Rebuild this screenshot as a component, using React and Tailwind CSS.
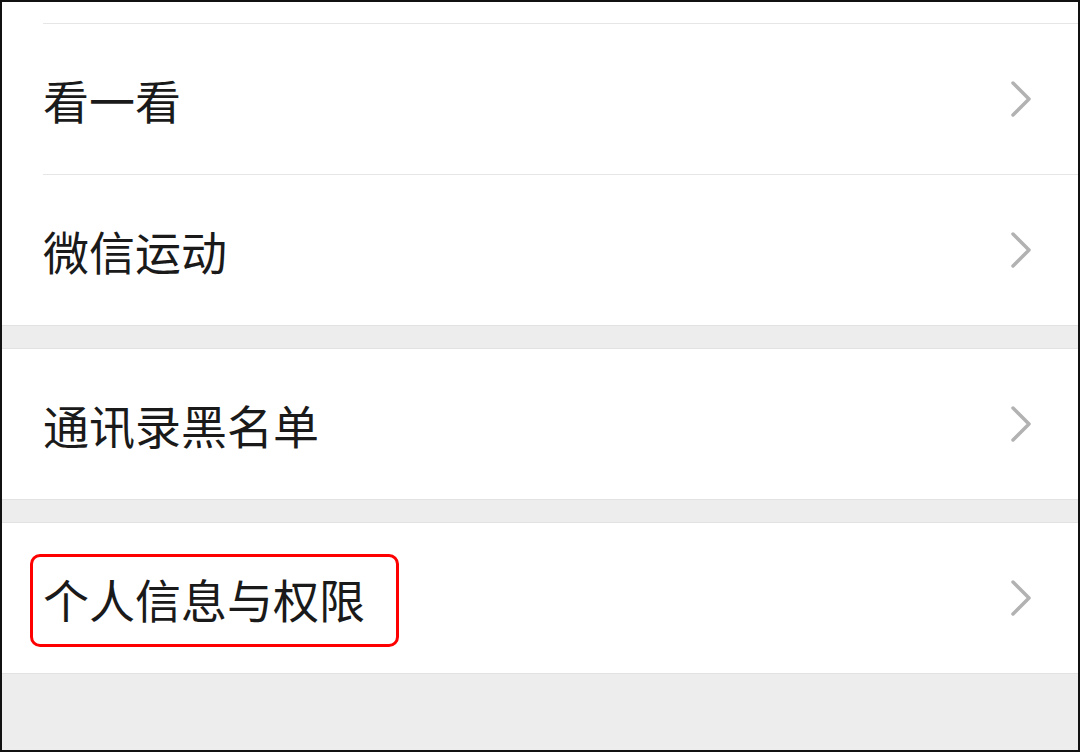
import React from 'react';

const font = { fontFamily: '"Noto Sans CJK SC", "Noto Sans", sans-serif' };

function Chevron() {
  return (
    <svg width="22" height="36" viewBox="0 0 22 36" fill="none" className="shrink-0">
      <polyline
        points="3,2 19,18 3,34"
        stroke="#b2b2b2"
        strokeWidth="3.5"
        strokeLinecap="round"
        strokeLinejoin="round"
      />
    </svg>
  );
}

function Row({ label, children }) {
  return (
    <div className="relative flex h-[150px] items-center justify-between bg-white pl-[41px] pr-[46px]">
      <span className="text-[46px] leading-none text-[#1a1a1a]" style={font}>
        {label}
      </span>
      <Chevron />
      {children}
    </div>
  );
}

const Divider = () => (
  <div className="bg-white">
    <div className="ml-[41px] h-px bg-[#e6e6e6]" />
  </div>
);

const Gap = () => <div className="h-[24px] border-y border-[#e2e2e2] bg-[#ededed]" />;

export default function App() {
  return (
    <div className="box-border h-[752px] w-[1080px] overflow-hidden border-2 border-[#111] bg-[#ededed]">
      <div className="h-[21px] bg-white" />
      <Divider />
      <Row label="看一看" />
      <Divider />
      <Row label="微信运动" />
      <Gap />
      <Row label="通讯录黑名单" />
      <Gap />
      <Row label="个人信息与权限">
        {/* highlight box */}
        <div className="absolute left-[28px] top-[31px] h-[93px] w-[369px] rounded-[10px] border-[3px] border-[#ff0000]" />
      </Row>
      <div className="border-t border-[#e2e2e2]" />
    </div>
  );
}
